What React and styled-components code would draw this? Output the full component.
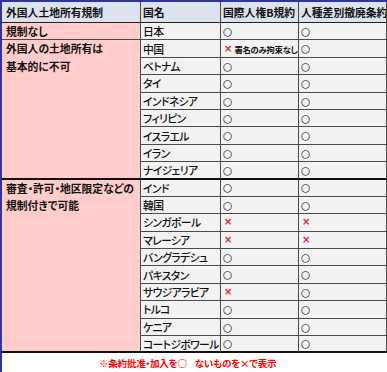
import React from "react";
import styled, { createGlobalStyle } from "styled-components";

const GlobalStyle = createGlobalStyle`
  html, body { margin: 0; padding: 0; background: #ffffff; }
  body { font-family: "Noto Sans CJK JP", "Noto Sans", sans-serif; }
`;

const Sheet = styled.div`
  width: 387px;
  height: 372px;
  box-sizing: border-box;
  border-left: 2px solid #2f3699;
  border-top: 2px solid #2f3699;
  display: flex;
  flex-direction: column;
  overflow: hidden;
  color: #111;
`;

const Grid = styled.div`
  display: grid;
  grid-template-columns: 139px 80px 78px 1fr;
  grid-template-rows: 21px repeat(19, 17.4px);
`;

const Cell = styled.div`
  box-sizing: border-box;
  display: flex;
  align-items: center;
  padding-left: 3px;
  white-space: nowrap;
  overflow: hidden;
  font-size: 10.8px;
  font-weight: 500;
  font-feature-settings: "palt";
  background: #f2f2f2;
  border-right: 1px solid #4a4a4a;
  border-bottom: ${(p) => (p.$thick ? "2px solid #111" : "1px solid #4a4a4a")};
`;

const NameCell = styled(Cell)`
  letter-spacing: -0.6px;
  padding-left: 2px;
`;

const HeadCell = styled(Cell)`
  background: #dce3ec;
  font-weight: 700;
  padding-left: ${(p) => (p.$first ? "4px" : "2px")};
  border-bottom: 1px solid #222;
`;

const GroupCell = styled(Cell)`
  grid-row: span ${(p) => p.$span};
  background: #ffcccc;
  align-items: flex-start;
  flex-direction: column;
  padding-left: 4px;
  line-height: 17.4px;
  font-weight: 700;
`;

const MarkCell = styled(Cell)`
  padding-left: 2px;
  gap: 2px;
`;

const Circle = styled.span`
  font-family: "DejaVu Sans", sans-serif;
  font-size: 10.5px;
  font-weight: 700;
  color: #000;
  line-height: 1;
`;

const Cross = styled.span`
  font-family: "DejaVu Sans", sans-serif;
  font-size: 10px;
  font-weight: 700;
  color: #e8202a;
  line-height: 1;
  padding-left: 1px;
`;

const Note = styled.span`
  font-size: 8.3px;
  font-weight: 700;
  letter-spacing: -0.2px;
`;

const Footer = styled.div`
  flex: 1;
  display: flex;
  align-items: center;
  gap: 8px;
  padding-left: 97px;
  background: #ffffff;
  color: #ff0000;
  font-size: 9.6px;
  font-weight: 700;
  letter-spacing: -0.3px;
  font-feature-settings: "palt";
  white-space: nowrap;
`;

const groups = [
  { label: ["規制なし"], rows: [["日本", "o", "o"]] },
  {
    label: ["外国人の土地所有は", "基本的に不可"],
    rows: [
      ["中国", "xnote", "o"],
      ["ベトナム", "o", "o"],
      ["タイ", "o", "o"],
      ["インドネシア", "o", "o"],
      ["フィリピン", "o", "o"],
      ["イスラエル", "o", "o"],
      ["イラン", "o", "o"],
      ["ナイジェリア", "o", "o"],
    ],
  },
  {
    label: ["審査・許可・地区限定などの", "規制付きで可能"],
    rows: [
      ["インド", "o", "o"],
      ["韓国", "o", "o"],
      ["シンガポール", "x", "x"],
      ["マレーシア", "x", "x"],
      ["バングラデシュ", "o", "o"],
      ["パキスタン", "o", "o"],
      ["サウジアラビア", "x", "o"],
      ["トルコ", "o", "o"],
      ["ケニア", "o", "o"],
      ["コートジボワール", "o", "o"],
    ],
  },
];

function Mark({ v }) {
  if (v === "o") return <Circle>○</Circle>;
  if (v === "x") return <Cross>×</Cross>;
  return (
    <>
      <Cross>×</Cross>
      <Note>署名のみ拘束なし</Note>
    </>
  );
}

export default function App() {
  return (
    <>
      <GlobalStyle />
      <Sheet>
        <Grid>
          <HeadCell $first>外国人土地所有規制</HeadCell>
          <HeadCell>国名</HeadCell>
          <HeadCell>国際人権B規約</HeadCell>
          <HeadCell>人種差別撤廃条約</HeadCell>
          {groups.map((g, gi) => {
            const thick = gi > 0;
            return g.rows.map((r, ri) => {
              const last = ri === g.rows.length - 1;
              const t = thick && last;
              return (
                <React.Fragment key={`${gi}-${ri}`}>
                  {ri === 0 && (
                    <GroupCell $span={g.rows.length} $thick={thick}>
                      {g.label.map((l) => (
                        <span key={l}>{l}</span>
                      ))}
                    </GroupCell>
                  )}
                  <NameCell $thick={t}>{r[0]}</NameCell>
                  <MarkCell $thick={t}>
                    <Mark v={r[1]} />
                  </MarkCell>
                  <MarkCell $thick={t}>
                    <Mark v={r[2]} />
                  </MarkCell>
                </React.Fragment>
              );
            });
          })}
        </Grid>
        <Footer>
          <span>※条約批准・加入を○</span>
          <span>ないものを×で表示</span>
        </Footer>
      </Sheet>
    </>
  );
}
